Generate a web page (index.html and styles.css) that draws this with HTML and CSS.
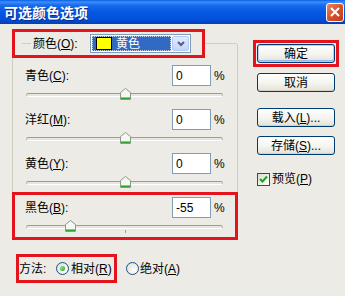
FILE: index.html
```html
<!DOCTYPE html>
<html lang="zh-CN">
<head>
    <meta charset="UTF-8">
    <title>可选颜色选项</title>
    <link rel="stylesheet" href="styles.css">
</head>
<body>
    <div class="titlebar">
        <span class="title">可选颜色选项</span>
        <span class="close">
            <svg width="10" height="10" viewBox="0 0 10 10"><path d="M1 1 L9 9 M9 1 L1 9" stroke="#fff" stroke-width="2"/></svg>
        </span>
    </div>
    <div class="dialog">
        <div class="main">
            <fieldset class="group">
                <legend class="color-pick">
                    <span class="tick"></span>
                    <label>颜色(<u>O</u>):</label>
                    <div class="combo">
                        <span class="combo-value"><span class="swatch"></span>黄色</span>
                        <span class="combo-btn">
                            <svg width="8" height="6" viewBox="0 0 8 6"><path d="M1 1 L4 4 L7 1" fill="none" stroke="#4d6185" stroke-width="2"/></svg>
                        </span>
                    </div>
                </legend>

                <div class="row">
                    <div class="field"><label>青色(<u>C</u>):</label><input type="text" value="0"><span class="pct">%</span></div>
                    <div class="slider"><span class="track"></span>
                        <svg class="thumb" style="left: 50%;" width="11" height="12" viewBox="0 0 11 12"><path d="M0.5 4.5 L5.5 0.5 L10.5 4.5 V11.5 H0.5 Z" fill="#f6f6f2" stroke="#8a9a8a"/><path d="M1 9.5 H10" stroke="#7ccf7c"/><path d="M1 10.5 H10" stroke="#2ba52b"/></svg>
                    </div>
                </div>
                <div class="row">
                    <div class="field"><label>洋红(<u>M</u>):</label><input type="text" value="0"><span class="pct">%</span></div>
                    <div class="slider"><span class="track"></span>
                        <svg class="thumb" style="left: 50%;" width="11" height="12" viewBox="0 0 11 12"><path d="M0.5 4.5 L5.5 0.5 L10.5 4.5 V11.5 H0.5 Z" fill="#f6f6f2" stroke="#8a9a8a"/><path d="M1 9.5 H10" stroke="#7ccf7c"/><path d="M1 10.5 H10" stroke="#2ba52b"/></svg>
                    </div>
                </div>
                <div class="row">
                    <div class="field"><label>黄色(<u>Y</u>):</label><input type="text" value="0"><span class="pct">%</span></div>
                    <div class="slider"><span class="track"></span>
                        <svg class="thumb" style="left: 50%;" width="11" height="12" viewBox="0 0 11 12"><path d="M0.5 4.5 L5.5 0.5 L10.5 4.5 V11.5 H0.5 Z" fill="#f6f6f2" stroke="#8a9a8a"/><path d="M1 9.5 H10" stroke="#7ccf7c"/><path d="M1 10.5 H10" stroke="#2ba52b"/></svg>
                    </div>
                </div>
                <div class="row mark-row">
                    <div class="field"><label>黑色(<u>B</u>):</label><input type="text" value="-55"><span class="pct">%</span></div>
                    <div class="slider"><span class="track"></span><span class="center-tick"></span>
                        <svg class="thumb" style="left: 22.5%;" width="11" height="12" viewBox="0 0 11 12"><path d="M0.5 4.5 L5.5 0.5 L10.5 4.5 V11.5 H0.5 Z" fill="#f6f6f2" stroke="#8a9a8a"/><path d="M1 9.5 H10" stroke="#7ccf7c"/><path d="M1 10.5 H10" stroke="#2ba52b"/></svg>
                    </div>
                </div>
            </fieldset>

            <div class="method">
                <div class="method-mark">
                    <span class="method-label">方法:</span>
                    <span class="radio checked"></span>
                    <span class="radio-text">相对(<u>R</u>)</span>
                </div>
                <span class="radio radio-second"></span>
                <span class="radio-text radio-text-second">绝对(<u>A</u>)</span>
            </div>
        </div>

        <div class="side">
            <div class="btn-mark"><button class="btn default">确定</button></div>
            <button class="btn cancel">取消</button>
            <button class="btn load">载入(<u>L</u>)...</button>
            <button class="btn save">存储(<u>S</u>)...</button>
            <div class="check">
                <span class="box">
                    <svg width="9" height="8" viewBox="0 0 9 8"><path d="M1 4 L3.5 6.5 L8 1.5" fill="none" stroke="#21a121" stroke-width="2"/></svg>
                </span>
                <span class="check-text">预览(<u>P</u>)</span>
            </div>
        </div>
    </div>
</body>
</html>
```

FILE: styles.css
```css
body {
    margin: 0;
    width: 345px;
    height: 296px;
    overflow: hidden;
    background: #ecebe6;
    font-family: "Liberation Sans", "Noto Sans CJK SC", sans-serif;
    font-size: 12px;
    line-height: 14px;
    color: #000;
}
u {
    text-decoration: underline;
}

/* title bar */
.titlebar {
    height: 24px;
    display: flex;
    align-items: center;
    justify-content: space-between;
    padding-left: 4px;
    background: linear-gradient(#0a5fe6, #3d8ffa 2px, #1a6cec 5px, #0458e3 12px, #0250dc 19px, #023fb6 24px);
}
.title {
    color: #fff;
    font-family: "Noto Sans CJK SC", sans-serif;
    font-weight: bold;
    font-size: 14px;
    text-shadow: 1px 1px #0b2a8c;
}
.close {
    width: 18px;
    height: 19px;
    margin-right: 1px;
    box-sizing: border-box;
    border: 1px solid #fff;
    border-radius: 3px;
    background: linear-gradient(135deg, #e9866a, #d6522d 50%, #c13c16);
    display: flex;
    align-items: center;
    justify-content: center;
}

.dialog {
    display: flex;
}
.main {
    width: 253px;
    padding: 5px 0 0 12px;
    box-sizing: border-box;
}

/* group box */
.group {
    margin: 0;
    width: 226px;
    box-sizing: border-box;
    border: 1px solid #cfcdc0;
    border-radius: 3px;
    padding: 2px 0 0;
}
.color-pick {
    margin-left: -1px;
    padding: 0;
    width: 193px;
    height: 29px;
    box-sizing: border-box;
    border: 3px solid #e3141b;
    display: flex;
    align-items: center;
}
.tick {
    width: 9px;
    height: 1px;
    margin: 0 2px 0 7px;
    background: #cfcdc0;
}
.combo {
    margin-left: auto;
    margin-right: 11px;
    width: 101px;
    height: 19px;
    box-sizing: border-box;
    border: 1px solid #7f9db9;
    background: #fff;
    padding: 1px;
    display: flex;
}
.combo-value {
    flex: 1;
    margin-right: 1px;
    background: #316ac5;
    color: #fff;
    display: flex;
    align-items: center;
    outline: 1px dotted #c8d6f0;
    outline-offset: -1px;
}
.swatch {
    width: 16px;
    height: 13px;
    box-sizing: border-box;
    border: 1px solid #000;
    background: #ffff00;
    margin: 0 4px 0 4px;
}
.combo-btn {
    width: 17px;
    box-sizing: border-box;
    border: 1px solid #b4c8f5;
    border-radius: 2px;
    background: linear-gradient(#e2ebfe, #c3d4fb);
    display: flex;
    align-items: center;
    justify-content: center;
}

/* rows */
.row {
    padding: 5px 11px 0 12px;
}
.field {
    display: flex;
    align-items: center;
    height: 21px;
}
.field label {
    flex: 1;
}
.field input {
    width: 39px;
    height: 21px;
    box-sizing: border-box;
    border: 1px solid #7f9db9;
    padding: 0 0 0 3px;
    font: inherit;
    background: #fff;
}
.pct {
    width: 12px;
    margin-left: 3px;
}
.slider {
    position: relative;
    height: 18px;
    width: 197px;
    margin-left: 1px;
}
.track {
    position: absolute;
    left: 0;
    right: 0;
    top: 7px;
    height: 4px;
    box-sizing: border-box;
    border: 1px solid #b9b8b0;
    border-top-color: #9d9c95;
    border-bottom-color: #fff;
    border-radius: 2px;
    background: #e6e5de;
}
.thumb {
    position: absolute;
    top: 2px;
    margin-left: -5px;
}
.center-tick {
    position: absolute;
    left: 50%;
    top: 12px;
    width: 1px;
    height: 3px;
    background: #9d9c95;
}
.mark-row {
    margin: 0 -1px -1px;
    border: 3px solid #e3141b;
    padding: 2px 9px 1px 10px;
}

/* method */
.method {
    display: flex;
    align-items: center;
    margin: 14px 0 0 4px;
}
.method-mark {
    display: flex;
    align-items: center;
    width: 101px;
    height: 29px;
    box-sizing: border-box;
    border: 3px solid #e3141b;
}
.method-label {
    width: 37px;
}
.radio {
    width: 13px;
    height: 13px;
    box-sizing: border-box;
    border: 1px solid #1c5180;
    border-radius: 50%;
    background: radial-gradient(circle at 65% 65%, #fff, #dcdbd3);
    display: flex;
    align-items: center;
    justify-content: center;
}
.radio.checked::after {
    content: "";
    width: 5px;
    height: 5px;
    border-radius: 50%;
    background: radial-gradient(circle at 35% 35%, #8ee08e, #1f9a1f);
}
.radio-text {
    margin-left: 2px;
}
.radio-second {
    margin-left: 9px;
}
.radio-text-second {
    margin-left: 1px;
}

/* side buttons */
.side {
    padding-top: 16px;
    display: flex;
    flex-direction: column;
    align-items: flex-start;
}
.btn-mark {
    border: 3px solid #e3141b;
    padding: 1px;
    display: flex;
}
.btn {
    width: 78px;
    height: 19px;
    padding: 0;
    border: 1px solid #003c74;
    border-radius: 3px;
    background: linear-gradient(#fff, #f4f4f0 55%, #e3e2d9);
    box-shadow: inset 0 -1px #d6d0c5;
    font: inherit;
    color: #000;
}
.btn.default {
    box-shadow: inset 0 0 0 1px #b9cdf2, inset 0 -2px #98b4e8;
}
.cancel, .load, .save {
    margin-left: 4px;
}
.cancel {
    margin-top: 6px;
}
.load {
    margin-top: 16px;
}
.save {
    margin-top: 9px;
}
.check {
    display: flex;
    align-items: center;
    margin: 17px 0 0 4px;
}
.box {
    width: 13px;
    height: 13px;
    box-sizing: border-box;
    border: 1px solid #1c5180;
    background: linear-gradient(135deg, #dcdbd3, #fff);
    display: flex;
    align-items: center;
    justify-content: center;
}
.check-text {
    margin-left: 2px;
}
```
